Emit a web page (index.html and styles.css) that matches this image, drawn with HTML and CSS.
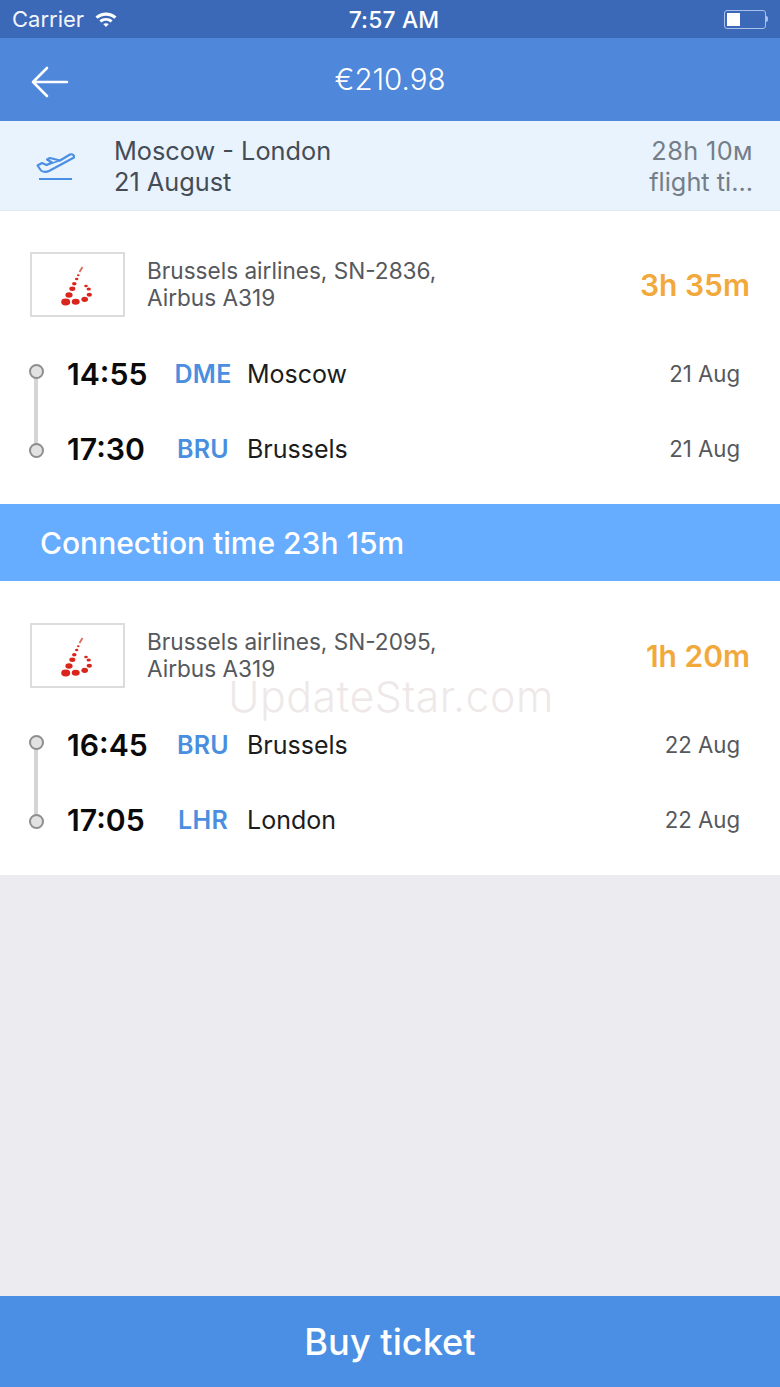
FILE: index.html
```html
<!doctype html>
<html>
<head>
<meta charset="utf-8">
<title>Flight details</title>
<link rel="stylesheet" href="styles.css">
</head>

<body>
<div class="page">
	<div class="status">
		<div class="status-left">
			<span>Carrier</span>
			<svg class="wifi" width="24" height="16" viewBox="0 0 24 16">
				<path d="M1.5 5.5C7.5 0.2 16.5 0.2 22.5 5.5L20.4 7.7C15.5 3.6 8.5 3.6 3.6 7.7Z" fill="#fff"/>
				<path d="M5.4 9.4C9.2 6.2 14.8 6.2 18.6 9.4L16.6 11.5C13.9 9.3 10.1 9.3 7.4 11.5Z" fill="#fff"/>
				<path d="M9.2 13.1C10.9 11.9 13.1 11.9 14.8 13.1L12 16Z" fill="#fff"/>
			</svg>
		</div>
		<div class="status-time">7:57 AM</div>
		<div class="status-right">
			<div class="battery"><div class="battery-level"></div></div>
			<div class="battery-tip"></div>
		</div>
	</div>

	<div class="header">
		<svg class="back" width="38" height="32" viewBox="0 0 38 32">
			<path d="M36 16H2M16 2L2 16L16 30" fill="none" stroke="#fff" stroke-width="2.6" stroke-linecap="round" stroke-linejoin="round"/>
		</svg>
		<div class="price">€210.98</div>
	</div>

	<div class="summary">
		<svg class="plane" width="40" height="32" viewBox="0 0 40 32">
			<path d="M1.5 15.500L6 13L10.500 15L16 12.500L11 9.500L14 8L24 10.500L34 4.500C36.500 3.500 38.500 5.500 38 7.500L13 21C10 22.500 8 22.500 5 20.500Z" fill="none" stroke="#4a8fe3" stroke-width="2.100" stroke-linejoin="round"/>
			<path d="M10.500 15L24 10.500" fill="none" stroke="#4a8fe3" stroke-width="1.500"/>
			<path d="M3 29H36" stroke="#4a8fe3" stroke-width="2"/>
		</svg>
		<div class="route">
			<div>Moscow - London</div>
			<div>21 August</div>
		</div>
		<div class="total">
			<div class="total-time">28h 10м</div>
			<div>flight ti...</div>
		</div>
	</div>

	<div class="segment">
		<div class="carrier">
			<div class="logo">
				<svg width="36" height="44" viewBox="0 0 36 44">
					<g fill="#d9251c">
						<ellipse cx="5.700" cy="39" rx="4.500" ry="3.400"/>
						<ellipse cx="15.700" cy="38.700" rx="4" ry="3"/>
						<ellipse cx="24.700" cy="36.300" rx="3.300" ry="2.600"/>
						<ellipse cx="29.300" cy="31.700" rx="2.700" ry="2"/>
						<ellipse cx="28.700" cy="26" rx="2.200" ry="1.600"/>
						<ellipse cx="26" cy="23" rx="1.800" ry="1.200"/>
						<ellipse cx="9" cy="32" rx="3.600" ry="2.700"/>
						<ellipse cx="12.300" cy="25.700" rx="3" ry="2.200"/>
						<ellipse cx="14.300" cy="20.700" rx="2.300" ry="1.800"/>
						<ellipse cx="16.700" cy="16" rx="1.700" ry="1.300"/>
						<ellipse cx="18.300" cy="12.300" rx="1.300" ry="1"/>
					</g>
					<path d="M19.500 9L22.500 4" stroke="#e0685f" stroke-width="1.800"/>
				</svg>
			</div>
			<div class="carrier-name">
				<div>Brussels airlines, SN-2836,</div>
				<div>Airbus A319</div>
			</div>
			<div class="duration">3h 35m</div>
		</div>
		<div class="stops">
			<div class="stop">
				<div class="time">14:55</div>
				<div class="code">DME</div>
				<div class="city">Moscow</div>
				<div class="date">21 Aug</div>
			</div>
			<div class="stop">
				<div class="time">17:30</div>
				<div class="code">BRU</div>
				<div class="city">Brussels</div>
				<div class="date">21 Aug</div>
			</div>
		</div>
	</div>

	<div class="connection">Connection time 23h 15m</div>

	<div class="segment">
		<div class="carrier">
			<div class="logo">
				<svg width="36" height="44" viewBox="0 0 36 44">
					<g fill="#d9251c">
						<ellipse cx="5.700" cy="39" rx="4.500" ry="3.400"/>
						<ellipse cx="15.700" cy="38.700" rx="4" ry="3"/>
						<ellipse cx="24.700" cy="36.300" rx="3.300" ry="2.600"/>
						<ellipse cx="29.300" cy="31.700" rx="2.700" ry="2"/>
						<ellipse cx="28.700" cy="26" rx="2.200" ry="1.600"/>
						<ellipse cx="26" cy="23" rx="1.800" ry="1.200"/>
						<ellipse cx="9" cy="32" rx="3.600" ry="2.700"/>
						<ellipse cx="12.300" cy="25.700" rx="3" ry="2.200"/>
						<ellipse cx="14.300" cy="20.700" rx="2.300" ry="1.800"/>
						<ellipse cx="16.700" cy="16" rx="1.700" ry="1.300"/>
						<ellipse cx="18.300" cy="12.300" rx="1.300" ry="1"/>
					</g>
					<path d="M19.500 9L22.500 4" stroke="#e0685f" stroke-width="1.800"/>
				</svg>
			</div>
			<div class="carrier-name">
				<div>Brussels airlines, SN-2095,</div>
				<div>Airbus A319</div>
			</div>
			<div class="duration">1h 20m</div>
		</div>
		<div class="stops">
			<div class="stop">
				<div class="time">16:45</div>
				<div class="code">BRU</div>
				<div class="city">Brussels</div>
				<div class="date">22 Aug</div>
			</div>
			<div class="stop">
				<div class="time">17:05</div>
				<div class="code">LHR</div>
				<div class="city">London</div>
				<div class="date">22 Aug</div>
			</div>
		</div>
	</div>

	<div class="empty"></div>

	<div class="buy">Buy ticket</div>

	<div class="watermark">UpdateStar.com</div>
</div>
</body>
</html>
```

FILE: styles.css
```css
* {margin:0; padding:0; box-sizing:border-box;}

body {font-family:Inter, "Noto Sans", "Liberation Sans", sans-serif;}

.page {width:780px; height:1387px; position:relative; display:flex; flex-direction:column; background:#fff; overflow:hidden;}

/* status bar */
.status {height:38px; background:#3c68b8; color:#fff; display:grid; grid-template-columns:1fr auto 1fr; align-items:center; padding:0 12px;}
.status-left {display:flex; align-items:center; gap:10px; font-size:22px; color:#f2f5fb;}
.status-time {font-size:22.800px; font-weight:500; letter-spacing:0.2px; margin-left:8px;}
.status-right {display:flex; justify-content:flex-end; align-items:center;}
.battery {width:42px; height:19px; border:1px solid #a9c1ea; border-radius:3px; padding:2px;}
.battery-level {width:13px; height:13px; background:#fff;}
.battery-tip {width:2px; height:6px; background:#a9c1ea; border-radius:0 2px 2px 0;}

/* header */
.header {height:83px; background:#4f87db; display:flex; align-items:center; justify-content:center; position:relative;}
.back {position:absolute; left:31px; top:28px;}
.price {color:#fff; font-size:29.500px; font-weight:300; margin-top:-1px;}

/* route summary */
.summary {height:90px; background:#e8f3fe; border-bottom:1px solid #e3e8ee; display:flex; align-items:center; padding:0 27px 0 36px; font-size:25.300px; line-height:31px;}
.plane {flex:none; margin-top:1px;}
.route {color:#454c55; margin-left:38px; flex:1;}
.total {color:#757d87; text-align:right;}
.total-time {letter-spacing:0.4px;}

/* flight segment */
.segment {height:293px; background:#fff; padding:41px 30px 0;}
.connection + .segment {height:294px; padding-top:42px;}
.carrier {display:flex; align-items:center; height:65px;}
.logo {width:95px; height:65px; border:2px solid #dcdcdc; display:flex; align-items:center; justify-content:center; flex:none;}
.carrier-name {margin-left:22px; flex:1; font-size:22.600px; line-height:26.500px; color:#55585c;}
.duration {font-size:30px; font-weight:600; color:#f2a93b;}

.stops {margin-top:19px; position:relative;}
.stops:before {content:""; position:absolute; left:4px; top:36px; width:4px; height:79px; background:#d5d5d5;}
.stop {height:75px; display:flex; align-items:center; position:relative;}
.stop:before {content:""; box-sizing:border-box; width:15px; height:15px; border:2px solid #8e8e8e; border-radius:50%; background:#e2e2e2; position:absolute; left:-1px; top:28px;}
.stop:last-child:before {top:32px;}
.time {width:110px; margin-left:37px; font-size:30.200px; font-weight:600; color:#0a0a0a;}
.code {width:70px; text-align:center; font-size:25px; font-weight:600; color:#4a8fdf; margin-left:-9px; letter-spacing:0.3px;}
.city {flex:1; margin-left:9px; font-size:25px; color:#1c1c1c;}
.date {font-size:22.200px; color:#55585c; margin-right:10px;}

.connection {height:77px; background:#66adff; color:#fff; font-size:30px; font-weight:500; display:flex; align-items:center; padding-left:40px;}

.empty {flex:1; background:#ebebf0;}

.buy {height:91px; background:#4a8fe3; color:#fff; font-size:36.200px; font-weight:500; display:flex; align-items:center; justify-content:center;}

/* watermark sits over the page */
.watermark {position:absolute; left:228px; top:671px; font-size:42.800px; font-weight:300; color:#b09090; opacity:0.2; letter-spacing:0.5px;}
```
